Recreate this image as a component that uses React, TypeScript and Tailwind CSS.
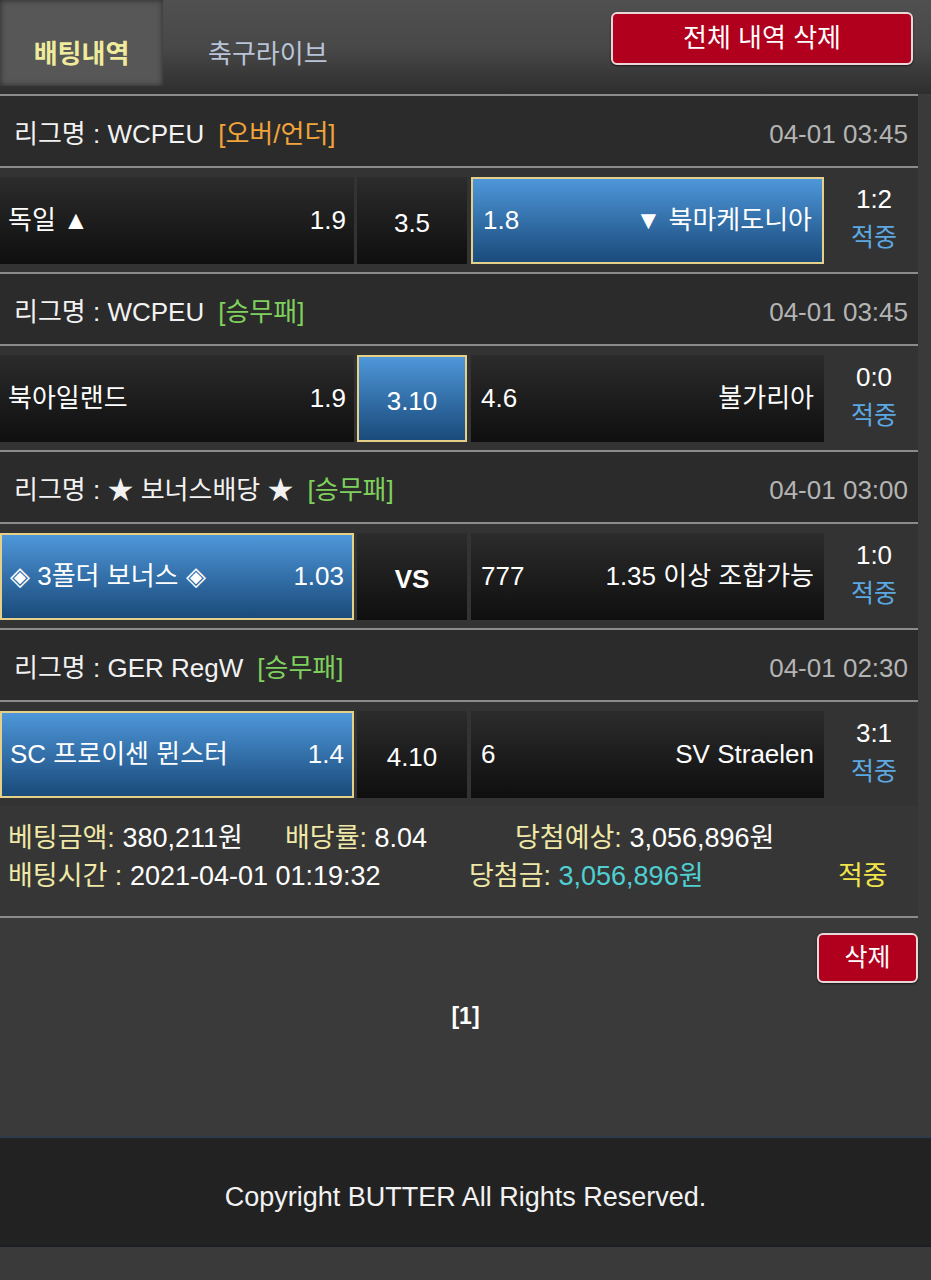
const font = "font-['Liberation_Sans','Noto_Sans_CJK_KR',sans-serif]";

type Side = { name: string; odds: string; picked?: boolean };

type Game = {
  league: string;
  kind: string;
  kindColor: string;
  time: string;
  home: Side;
  draw: { label: string; picked?: boolean; bold?: boolean };
  away: Side;
  score: string;
};

const games: Game[] = [
  {
    league: "WCPEU",
    kind: "[오버/언더]",
    kindColor: "text-[#f0a43a]",
    time: "04-01 03:45",
    home: { name: "독일 ▲", odds: "1.9" },
    draw: { label: "3.5" },
    away: { name: "▼ 북마케도니아", odds: "1.8", picked: true },
    score: "1:2",
  },
  {
    league: "WCPEU",
    kind: "[승무패]",
    kindColor: "text-[#7fd05c]",
    time: "04-01 03:45",
    home: { name: "북아일랜드", odds: "1.9" },
    draw: { label: "3.10", picked: true },
    away: { name: "불가리아", odds: "4.6" },
    score: "0:0",
  },
  {
    league: "★ 보너스배당 ★",
    kind: "[승무패]",
    kindColor: "text-[#7fd05c]",
    time: "04-01 03:00",
    home: { name: "◈ 3폴더 보너스 ◈", odds: "1.03", picked: true },
    draw: { label: "VS", bold: true },
    away: { name: "1.35 이상 조합가능", odds: "777" },
    score: "1:0",
  },
  {
    league: "GER RegW",
    kind: "[승무패]",
    kindColor: "text-[#7fd05c]",
    time: "04-01 02:30",
    home: { name: "SC 프로이센 뮌스터", odds: "1.4", picked: true },
    draw: { label: "4.10" },
    away: { name: "SV Straelen", odds: "6" },
    score: "3:1",
  },
];

const cellBase = "flex h-[87px] items-center text-[26px] text-white";
const darkCell = "bg-gradient-to-b from-[#2c2c2c] to-[#0f0f0f]";
const pickedCell = "border-2 border-[#e4d089] bg-gradient-to-b from-[#4e97da] to-[#1a4b7b]";

function GameBlock({ g }: { g: Game }) {
  return (
    <div>
      <div className="flex h-[72px] items-center justify-between border-t-2 border-[#8b8b8b] bg-[#2b2b2b] pl-[14px] pr-[10px] pt-[6px] text-[26px]">
        <div className="flex items-center gap-[14px]">
          <span className="text-[#f2f2f2]">리그명 : {g.league}</span>
          <span className={g.kindColor}>{g.kind}</span>
        </div>
        <span className="text-[#b4b4b4]">{g.time}</span>
      </div>
      <div className="flex h-[106px] items-start border-t-2 border-[#8b8b8b] bg-[#333333] pt-[9px]">
        <div
          className={`${cellBase} w-[354px] justify-between px-[8px] ${g.home.picked ? pickedCell : darkCell}`}
        >
          <span>{g.home.name}</span>
          <span>{g.home.odds}</span>
        </div>
        <div
          className={`${cellBase} ml-[3px] w-[110px] justify-center pt-[6px] ${g.draw.bold ? "font-bold" : ""} ${g.draw.picked ? pickedCell : darkCell}`}
        >
          {g.draw.label}
        </div>
        <div
          className={`${cellBase} ml-[4px] w-[353px] justify-between px-[10px] ${g.away.picked ? pickedCell : darkCell}`}
        >
          <span>{g.away.odds}</span>
          <span>{g.away.name}</span>
        </div>
        <div className="flex h-[87px] flex-1 flex-col items-center justify-center pb-[6px] pl-[6px]">
          <span className="text-[26px] leading-[38px] text-white">{g.score}</span>
          <span className="text-[25px] leading-[38px] text-[#5ca8e2]">적중</span>
        </div>
      </div>
    </div>
  );
}

function RedButton({ label, className }: { label: string; className: string }) {
  return (
    <button
      className={`flex items-center justify-center rounded-[6px] border-2 border-[#ead8d8] bg-[#b1001d] text-white shadow-[0_1px_2px_rgba(0,0,0,0.6)] ${className}`}
    >
      {label}
    </button>
  );
}

export default function App() {
  return (
    <div className={`${font} min-h-[1280px] w-[931px] bg-[#3a3a3a]`}>
      {/* top tabs */}
      <header className="flex h-[94px] items-start justify-between bg-gradient-to-b from-[#505050] via-[#484848] to-[#2e2e2e]">
        <div className="flex h-[86px] items-end">
          <div className="flex h-[86px] w-[163px] items-center justify-center bg-[#575757] pt-[22px] text-[26px] font-bold text-[#eeeb9c] shadow-[inset_0_0_6px_rgba(0,0,0,0.55)]">
            배팅내역
          </div>
          <div className="ml-[45px] flex h-[86px] items-center pt-[22px] text-[26px] text-[#b9c4d8]">
            축구라이브
          </div>
        </div>
        <RedButton label="전체 내역 삭제" className="mr-[18px] mt-[12px] h-[53px] w-[302px] text-[26px]" />
      </header>

      <div className="w-[918px]">
        {games.map((g, i) => (
          <GameBlock key={i} g={g} />
        ))}

        {/* bet summary */}
        <div className="flex h-[112px] flex-col justify-center gap-[10px] border-b-2 border-[#8b8b8b] bg-[#363636] pb-[8px] pl-[8px] text-[27px] leading-[28px]">
          <div className="flex">
            <span className="w-[277px]">
              <span className="text-[#efe8a6]">베팅금액: </span>
              <span className="text-white">380,211원</span>
            </span>
            <span className="w-[230px]">
              <span className="text-[#efe8a6]">배당률: </span>
              <span className="text-white">8.04</span>
            </span>
            <span>
              <span className="text-[#efe8a6]">당첨예상: </span>
              <span className="text-white">3,056,896원</span>
            </span>
          </div>
          <div className="flex">
            <span className="w-[461px]">
              <span className="text-[#efe8a6]">배팅시간 : </span>
              <span className="text-white">2021-04-01 01:19:32</span>
            </span>
            <span className="w-[369px]">
              <span className="text-[#efe8a6]">당첨금: </span>
              <span className="text-[#4fcfd2]">3,056,896원</span>
            </span>
            <span className="text-[#f2e54c]">적중</span>
          </div>
        </div>
      </div>

      <div className="flex w-[918px] justify-end pt-[15px]">
        <RedButton label="삭제" className="h-[50px] w-[101px] text-[25px]" />
      </div>

      <div className="pt-[16px] text-center text-[23px] font-bold text-white">[1]</div>

      <footer className="mt-[102px] flex h-[111px] items-center justify-center border-t-2 border-b-2 border-t-[#2d3b4a] border-b-[#1c1f24] bg-[#222222] pt-[12px] text-[27px] text-[#f2f2f2]">
        Copyright BUTTER All Rights Reserved.
      </footer>
    </div>
  );
}
